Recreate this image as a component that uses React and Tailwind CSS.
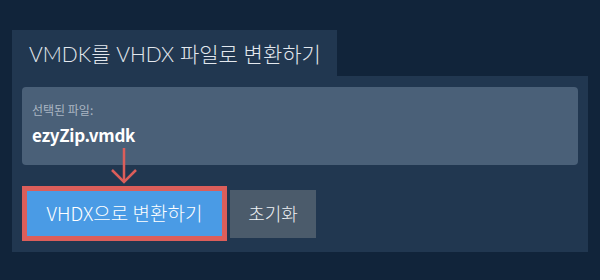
const App = () => {
    return (
        <div className="w-[600px] h-[280px] bg-[#11243a] pt-[30px] px-[12px] font-['Noto_Sans_CJK_KR',sans-serif]">
            <div className="w-[325px] h-[46px] bg-[#213750] flex items-center pl-[17px]">
                <h1 className="text-[21px] font-light text-[#e3e8ee] font-['Lato','Noto_Sans_CJK_KR',sans-serif] leading-none">
                    VMDK를 VHDX 파일로 변환하기
                </h1>
            </div>

            <div className="relative h-[176px] bg-[#213750] px-[10px] pt-[11px]">
                <div className="h-[78px] bg-[#4a6078] rounded-[4px] px-[10px] pt-[17px]">
                    <p className="text-[12px] text-[#aab6c3] leading-none">선택된 파일:</p>
                    <p className="mt-[10px] text-[17px] font-bold text-white leading-none tracking-[-0.3px]">
                        ezyZip.vmdk
                    </p>
                </div>

                <svg
                    className="absolute left-[98px] top-[72px]"
                    width="28"
                    height="38"
                    viewBox="0 0 28 38"
                    fill="none"
                    stroke="#dc5e5a"
                    strokeWidth="2.5"
                >
                    <path d="M14 0 V34" />
                    <path d="M2 22 L14 34 L26 22" />
                </svg>

                <div className="flex items-center gap-[3px] mt-[21px]">
                    <button className="w-[205px] h-[55px] border-[5px] border-[#dc5e5a] bg-[#4a9be5] text-white text-[19px] font-light flex items-center justify-center">
                        VHDX으로 변환하기
                    </button>
                    <button className="w-[86px] h-[48px] bg-[#4b5b6b] text-[#eef1f4] text-[18px] font-light flex items-center justify-center">
                        초기화
                    </button>
                </div>
            </div>
        </div>
    );
};

export default App;
